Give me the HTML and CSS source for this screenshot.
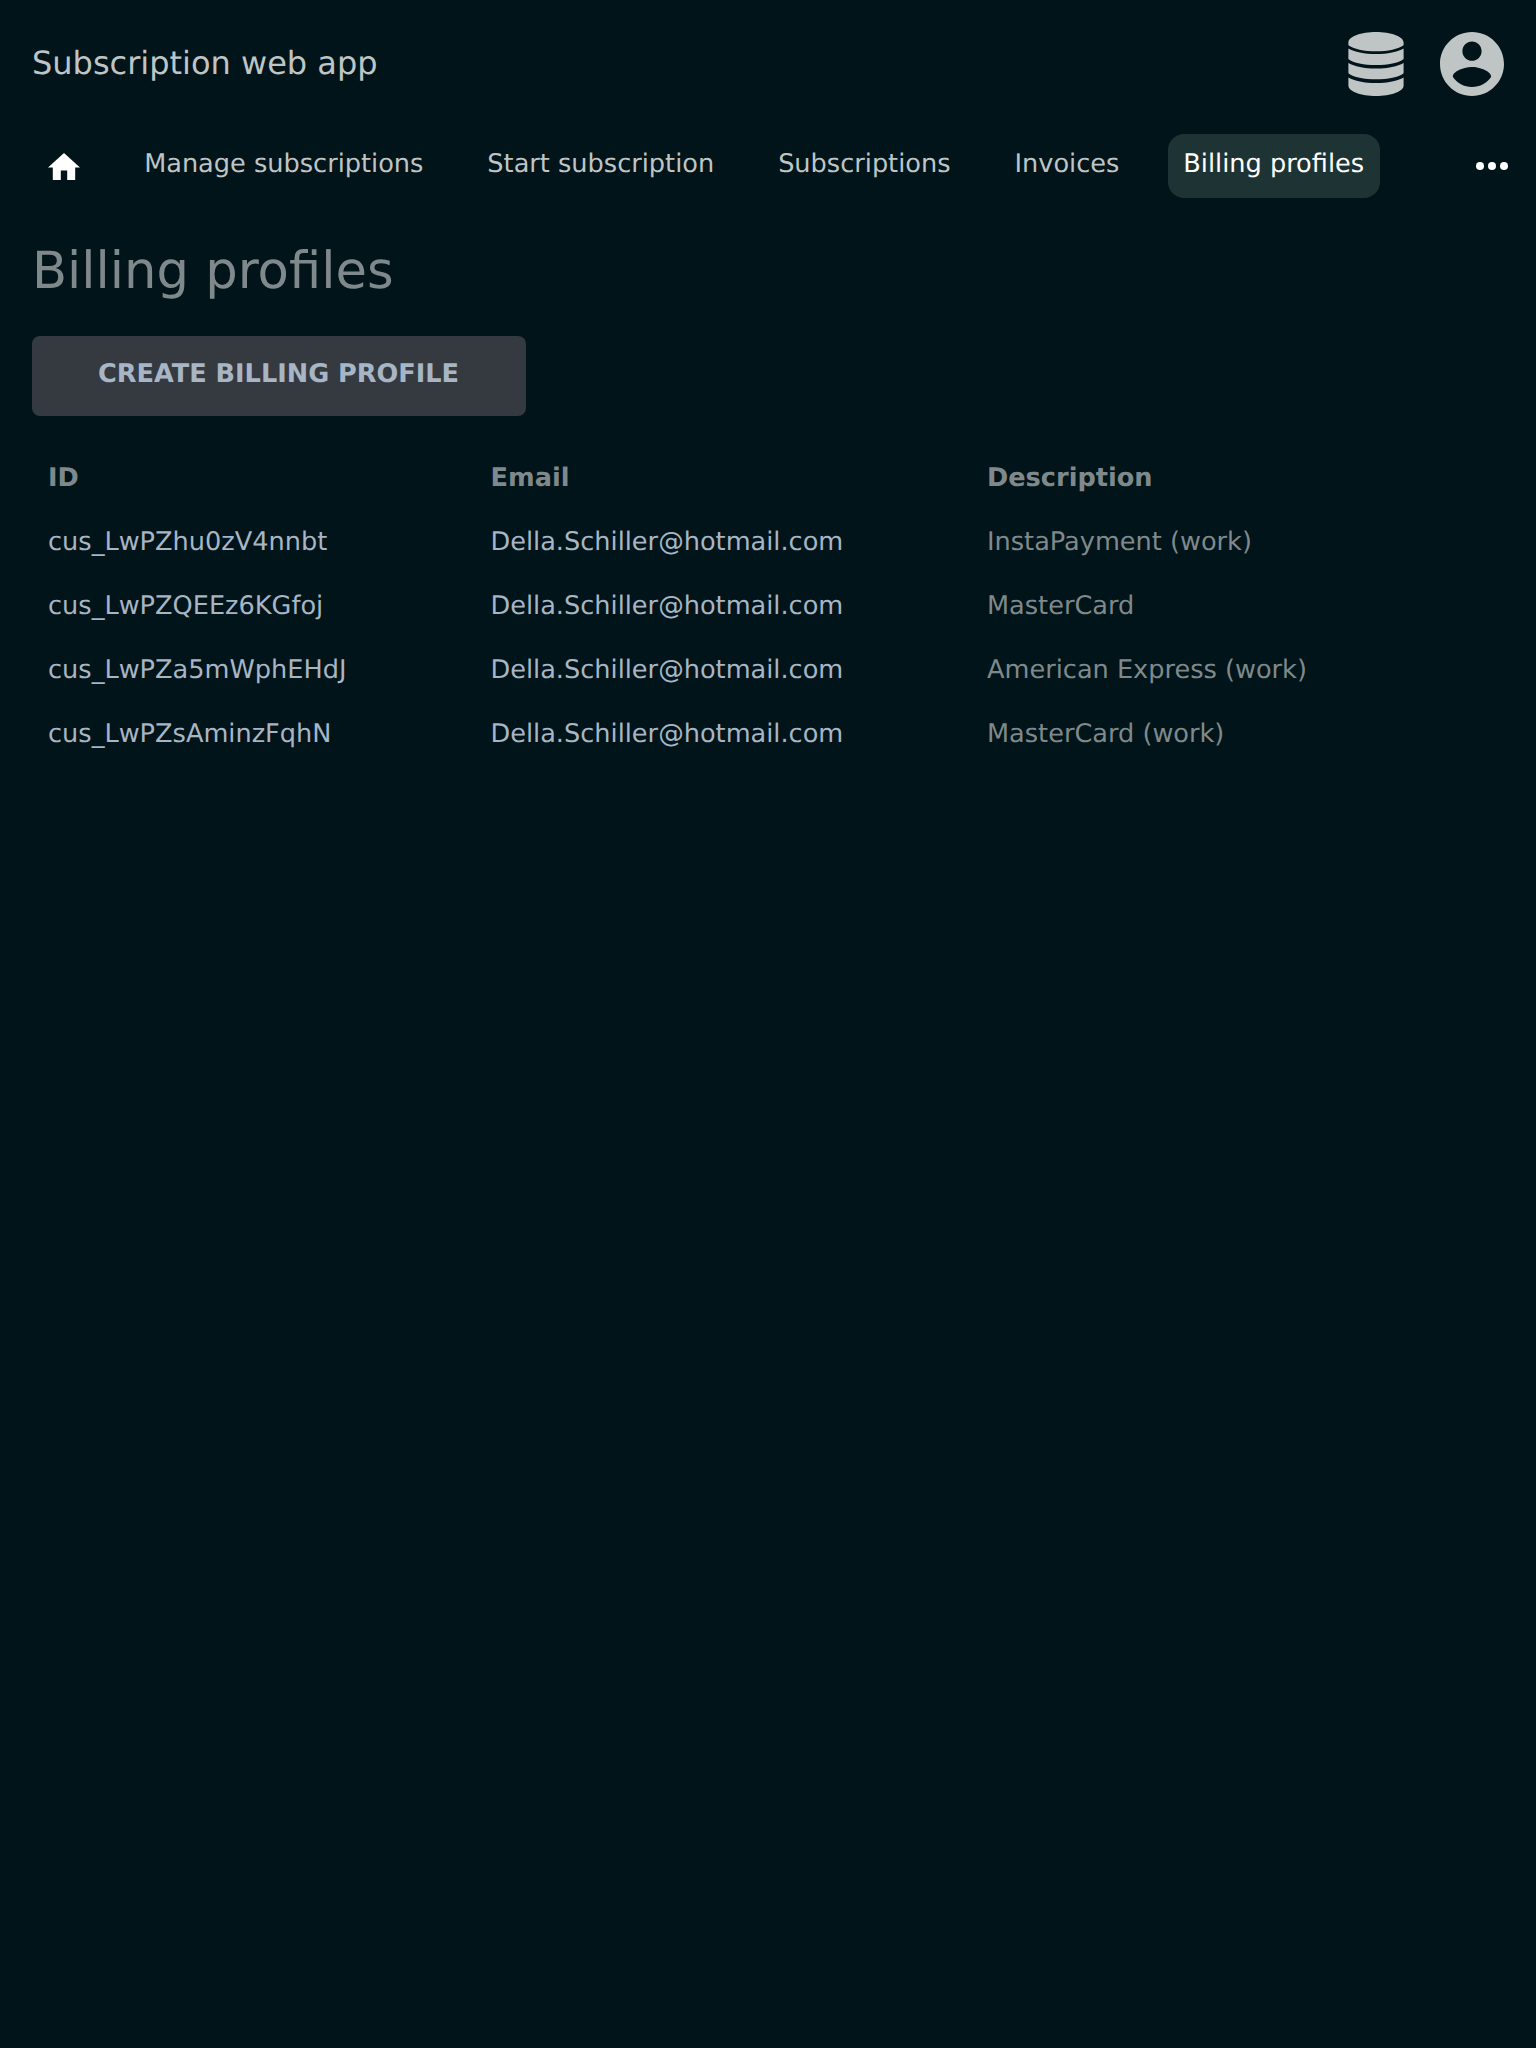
FILE: index.html
```html
<!DOCTYPE html>
<html lang="en">
<head>
<meta charset="utf-8">
<title>Billing profiles</title>
<link rel="stylesheet" href="styles.css">
</head>
<body>
<header class="header">
  <div class="brand">Subscription web app</div>
  <div class="menus">
    <svg class="icon-database" viewBox="-0.4 0 56.8 64" preserveAspectRatio="none"><path d="M28 0C43 0 56 4.500 56 10.500v2.700C51 17 40 19.300 28 19.300S5 17 0 13.200V10.500C0 4.500 13 0 28 0ZM0 16.500C6 20 16 22 28 22s22-2 28-5.500V27c-5 4-16 6-28 6S5 31 0 27ZM0 31c6 3.500 16 5.500 28 5.500S50 34.500 56 31v10.300c-5 4-16 6-28 6S5 45.300 0 41.300ZM0 45.500c6 3.500 16 5.500 28 5.500s22-2 28-5.500V53.500C56 59.500 43 64 28 64S0 59.500 0 53.500Z"/></svg>
    <svg class="icon-account" viewBox="2 2 20 20"><path d="M12 2C6.480 2 2 6.480 2 12s4.480 10 10 10 10-4.480 10-10S17.520 2 12 2zm0 3c1.660 0 3 1.340 3 3s-1.340 3-3 3-3-1.340-3-3 1.340-3 3-3zm0 14.200c-2.500 0-4.710-1.280-6-3.220.03-1.990 4-3.080 6-3.080 1.990 0 5.970 1.090 6 3.080-1.290 1.940-3.500 3.220-6 3.220z"/></svg>
  </div>
</header>
<nav class="nav">
  <a class="nav-home"><svg class="icon-home" viewBox="2 3 20 17"><path d="M10 20v-6h4v6h5v-8h3L12 3 2 12h3v8z"/></svg></a>
  <a class="nav-item">Manage subscriptions</a>
  <a class="nav-item">Start subscription</a>
  <a class="nav-item">Subscriptions</a>
  <a class="nav-item">Invoices</a>
  <a class="nav-item nav-item-current">Billing profiles</a>
  <a class="nav-more"><svg class="icon-more" viewBox="0 0 32 8"><circle cx="4" cy="4" r="4"/><circle cx="16" cy="4" r="4"/><circle cx="28" cy="4" r="4"/></svg></a>
</nav>
<main class="content">
  <h1 class="title">Billing profiles</h1>
  <a class="button">CREATE BILLING PROFILE</a>
  <table class="table">
    <colgroup><col class="col-id"><col class="col-email"><col></colgroup>
    <thead><tr><th>ID</th><th>Email</th><th>Description</th></tr></thead>
    <tbody>
      <tr><td><a class="link">cus_LwPZhu0zV4nnbt</a></td><td><a class="link">Della.Schiller@hotmail.com</a></td><td>InstaPayment (work)</td></tr>
      <tr><td><a class="link">cus_LwPZQEEz6KGfoj</a></td><td><a class="link">Della.Schiller@hotmail.com</a></td><td>MasterCard</td></tr>
      <tr><td><a class="link">cus_LwPZa5mWphEHdJ</a></td><td><a class="link">Della.Schiller@hotmail.com</a></td><td>American Express (work)</td></tr>
      <tr><td><a class="link">cus_LwPZsAminzFqhN</a></td><td><a class="link">Della.Schiller@hotmail.com</a></td><td>MasterCard (work)</td></tr>
    </tbody>
  </table>
</main>
</body>
</html>
```
FILE: styles.css
```css
* { box-sizing: border-box; }
body {
  margin: 0;
  min-height: 2048px;
  background: #001419;
  color: #7f898c;
  font-family: "DejaVu Sans", sans-serif;
  font-size: 25.6px;
  text-rendering: geometricPrecision;
}
svg { display: block; fill: currentColor; }
.header {
  display: flex;
  justify-content: space-between;
  height: 134px;
  padding: 32px 32px 0;
  color: #bfc4c5;
}
.brand { font-size: 32px; line-height: 62px; }
.menus { display: flex; gap: 36px; }
.icon-database { width: 56px; height: 64px; }
.icon-account { width: 64px; height: 64px; }
.nav {
  display: flex;
  gap: 33.280px;
  height: 64px;
  padding: 0 28px 0 32px;
  color: #bfc4c5;
}
.nav-home, .nav-more { display: flex; align-items: center; color: #fff; }
.nav-home { width: 63.500px; padding: 0.5px 0 0 16px; }
.icon-home { width: 32px; height: 27.200px; }
.nav-more { margin-left: auto; }
.icon-more { width: 32px; height: 8px; }
.nav-item { padding: 0 15.360px; border-radius: 16px; line-height: 60px; white-space: nowrap; }
.nav-item-current { padding-right: 16px; background: #1e3434; color: #fff; }
.content { padding: 32px; }
.title { margin: 0; height: 106px; font-size: 51.200px; font-weight: 400; line-height: 82px; }
.button {
  display: block;
  width: 494px;
  height: 80px;
  padding-right: 1px;
  border-radius: 8px;
  background: #353a41;
  color: #a8b5c4;
  font-weight: 700;
  line-height: 76px;
  text-align: center;
}
.table {
  width: 100%;
  margin-top: 29px;
  border-collapse: collapse;
  table-layout: fixed;
}
.col-id { width: 442.500px; }
.col-email { width: 496.500px; }
th, td { height: 64px; padding: 2px 16px 0; text-align: left; line-height: 62px; }
.link { color: #a8b5c4; }
```
